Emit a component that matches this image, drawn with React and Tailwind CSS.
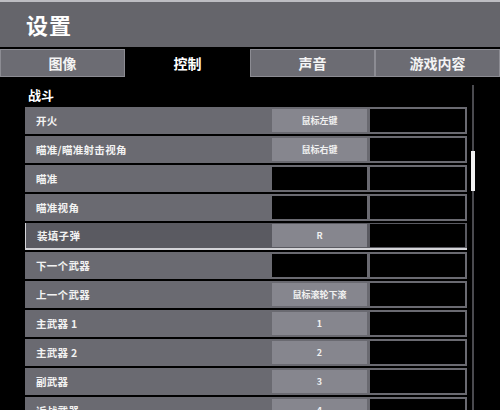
import React from 'react';

const tabs = ['图像', '控制', '声音', '游戏内容'];

const bindings = [
  { name: '开火', key1: '鼠标左键' },
  { name: '瞄准/瞄准射击视角', key1: '鼠标右键' },
  { name: '瞄准' },
  { name: '瞄准视角' },
  { name: '装填子弹', key1: 'R', active: true },
  { name: '下一个武器' },
  { name: '上一个武器', key1: '鼠标滚轮下滚' },
  { name: '主武器 1', key1: '1' },
  { name: '主武器 2', key1: '2' },
  { name: '副武器', key1: '3' },
  { name: '近战武器', key1: '4' },
];

const KeyBox = ({ label }) =>
  label ? (
    <div className="flex h-full w-[95px] items-center justify-center bg-[#86868e] text-[9px] font-bold text-[#f0f0f0]">
      {label}
    </div>
  ) : (
    <div className="h-full w-[95px] bg-black" />
  );

const BindingRow = ({ item }) => (
  <div
    className={
      item.active
        ? 'flex h-[27px] items-center border-l border-b-2 border-[#d4d4d8] bg-[#5a5a61] pr-[2px]'
        : 'flex h-[27px] items-center bg-[#6a6a71] pr-[2px]'
    }
  >
    <div className="flex-1 pl-[11px] text-[10.5px] font-bold tracking-[0.3px] text-[#f2f2f2]">{item.name}</div>
    <div className="flex h-[23px] gap-[3px]">
      <KeyBox label={item.key1} />
      <KeyBox label={item.key2} />
    </div>
  </div>
);

export default function App() {
  return (
    <div
      className="relative h-[410px] w-[500px] overflow-hidden bg-black"
      style={{ fontFamily: '"Noto Sans CJK SC", "Noto Sans", sans-serif' }}
    >
      {/* header */}
      <div className="flex h-[47px] items-center border-t-2 border-[#bdbdc2] bg-[#65656b] pl-[26px]">
        <h1 className="text-[22px] font-bold tracking-[1px] text-white">设置</h1>
      </div>

      {/* tabs */}
      <div className="mt-[2px] flex h-[28px]">
        {tabs.map((t, i) =>
          i === 1 ? (
            <div key={t} className="flex w-[125px] items-center justify-center bg-black text-[14px] font-bold text-white">
              {t}
            </div>
          ) : (
            <div
              key={t}
              className="flex flex-1 items-center justify-center border border-[#8c8c93] bg-[#6c6c73] text-[14px] font-bold text-[#f4f4f4]"
            >
              {t}
            </div>
          )
        )}
      </div>

      {/* content */}
      <div className="flex">
        <div className="w-[467px] pl-[25px]">
          <div className="pl-[3px] pt-[7px] text-[13px] font-bold leading-[22px] text-white">战斗</div>
          <div className="mt-[1px] flex flex-col gap-[2px]">
            {bindings.map((b) => (
              <BindingRow key={b.name} item={b} />
            ))}
          </div>
        </div>
        <div className="ml-[4px] mt-[8px] flex w-[4px] justify-center">
          <div className="relative h-[330px] w-[2px] bg-[#4a4a4f]">
            <div className="absolute left-[-1px] top-[66px] h-[40px] w-[4px] bg-[#f2f2f2]" />
          </div>
        </div>
      </div>
    </div>
  );
}
